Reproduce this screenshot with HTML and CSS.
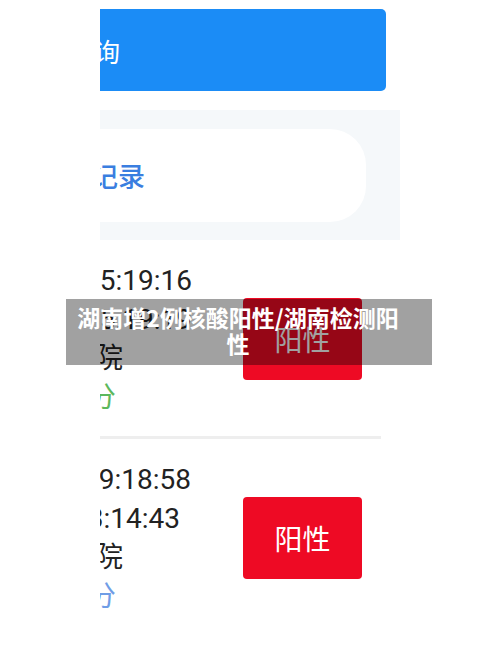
FILE: index.html
```html
<!DOCTYPE html>
<html>

<head>
    <meta charset="utf-8" />
    <meta name="viewport" content="width=device-width, initial-scale=1" />
    <title>湖南增2例核酸阳性</title>
    <link rel="stylesheet" href="styles.css">
</head>

<body>
    <div class="screen">
        <div class="query-btn"><span class="query-text">查询</span></div>

        <div class="tabs">
            <div class="tab-active"><span class="tab-text">记录</span></div>
        </div>

        <div class="record with-line">
            <div class="info">
                <div class="cut-16">15:19:16</div>
                <div class="cut-16">15:19:19</div>
                <div class="cut-33">医院</div>
                <div class="cut-40 green">评分</div>
            </div>
            <div class="result">阳性</div>
        </div>

        <div class="record">
            <div class="info">
                <div class="cut-17">09:18:58</div>
                <div class="cut-28">13:14:43</div>
                <div class="cut-33">医院</div>
                <div class="cut-40 blue">评分</div>
            </div>
            <div class="result">阳性</div>
        </div>
    </div>

    <div class="caption">湖南增2例核酸阳性/湖南检测阳性</div>
</body>

</html>
```

FILE: styles.css
```css
body {
    margin: 0;
    background: #fff;
    font-family: Roboto, "Noto Sans CJK SC", sans-serif;
}

.screen {
    width: 300px;
    margin-left: 100px;
    overflow: hidden;
}

.query-btn {
    display: flex;
    align-items: center;
    width: 286px;
    height: 82px;
    margin-top: 9px;
    background: #1b8cf6;
    border-radius: 0 5px 5px 0;
    white-space: nowrap;
}

.query-text {
    margin-left: -32px;
    font-size: 26px;
    color: #fff;
}

.tabs {
    height: 130px;
    margin-top: 19px;
    padding: 19px 0 18px;
    box-sizing: border-box;
    background: #f5f8fa;
}

.tab-active {
    display: flex;
    align-items: center;
    width: 266px;
    height: 93px;
    background: #fff;
    border-radius: 0 36px 36px 0;
    white-space: nowrap;
}

.tab-text {
    margin-left: -9px;
    font-size: 27px;
    font-weight: 500;
    color: #3a7ee0;
}

.record {
    display: flex;
    align-items: center;
    width: 281px;
    padding: 21px 0 19px;
}

.with-line {
    border-bottom: 3px solid #eeeeee;
}

.info {
    width: 143px;
    font-size: 28px;
    line-height: 39px;
    color: #222;
    white-space: nowrap;
    overflow: hidden;
}

.cut-16 { margin-left: -16px; }
.cut-17 { margin-left: -17px; }
.cut-28 { margin-left: -28px; }
.cut-33 { margin-left: -33px; }
.cut-40 { margin-left: -40px; }

.green {
    color: #5cb85c;
}

.blue {
    color: #6f9de6;
}

.result {
    display: flex;
    align-items: center;
    justify-content: center;
    width: 119px;
    height: 82px;
    background: #ee0a24;
    border-radius: 4px;
    color: #fff;
    font-size: 28px;
}

.caption {
    position: absolute;
    left: 66px;
    top: 299px;
    width: 366px;
    height: 66px;
    box-sizing: border-box;
    padding: 5px 26px 0 4px;
    background: rgba(0, 0, 0, 0.37);
    color: #fff;
    font-family: "Noto Sans CJK SC", sans-serif;
    font-size: 23px;
    font-weight: 700;
    line-height: 26px;
    text-align: center;
}
```
